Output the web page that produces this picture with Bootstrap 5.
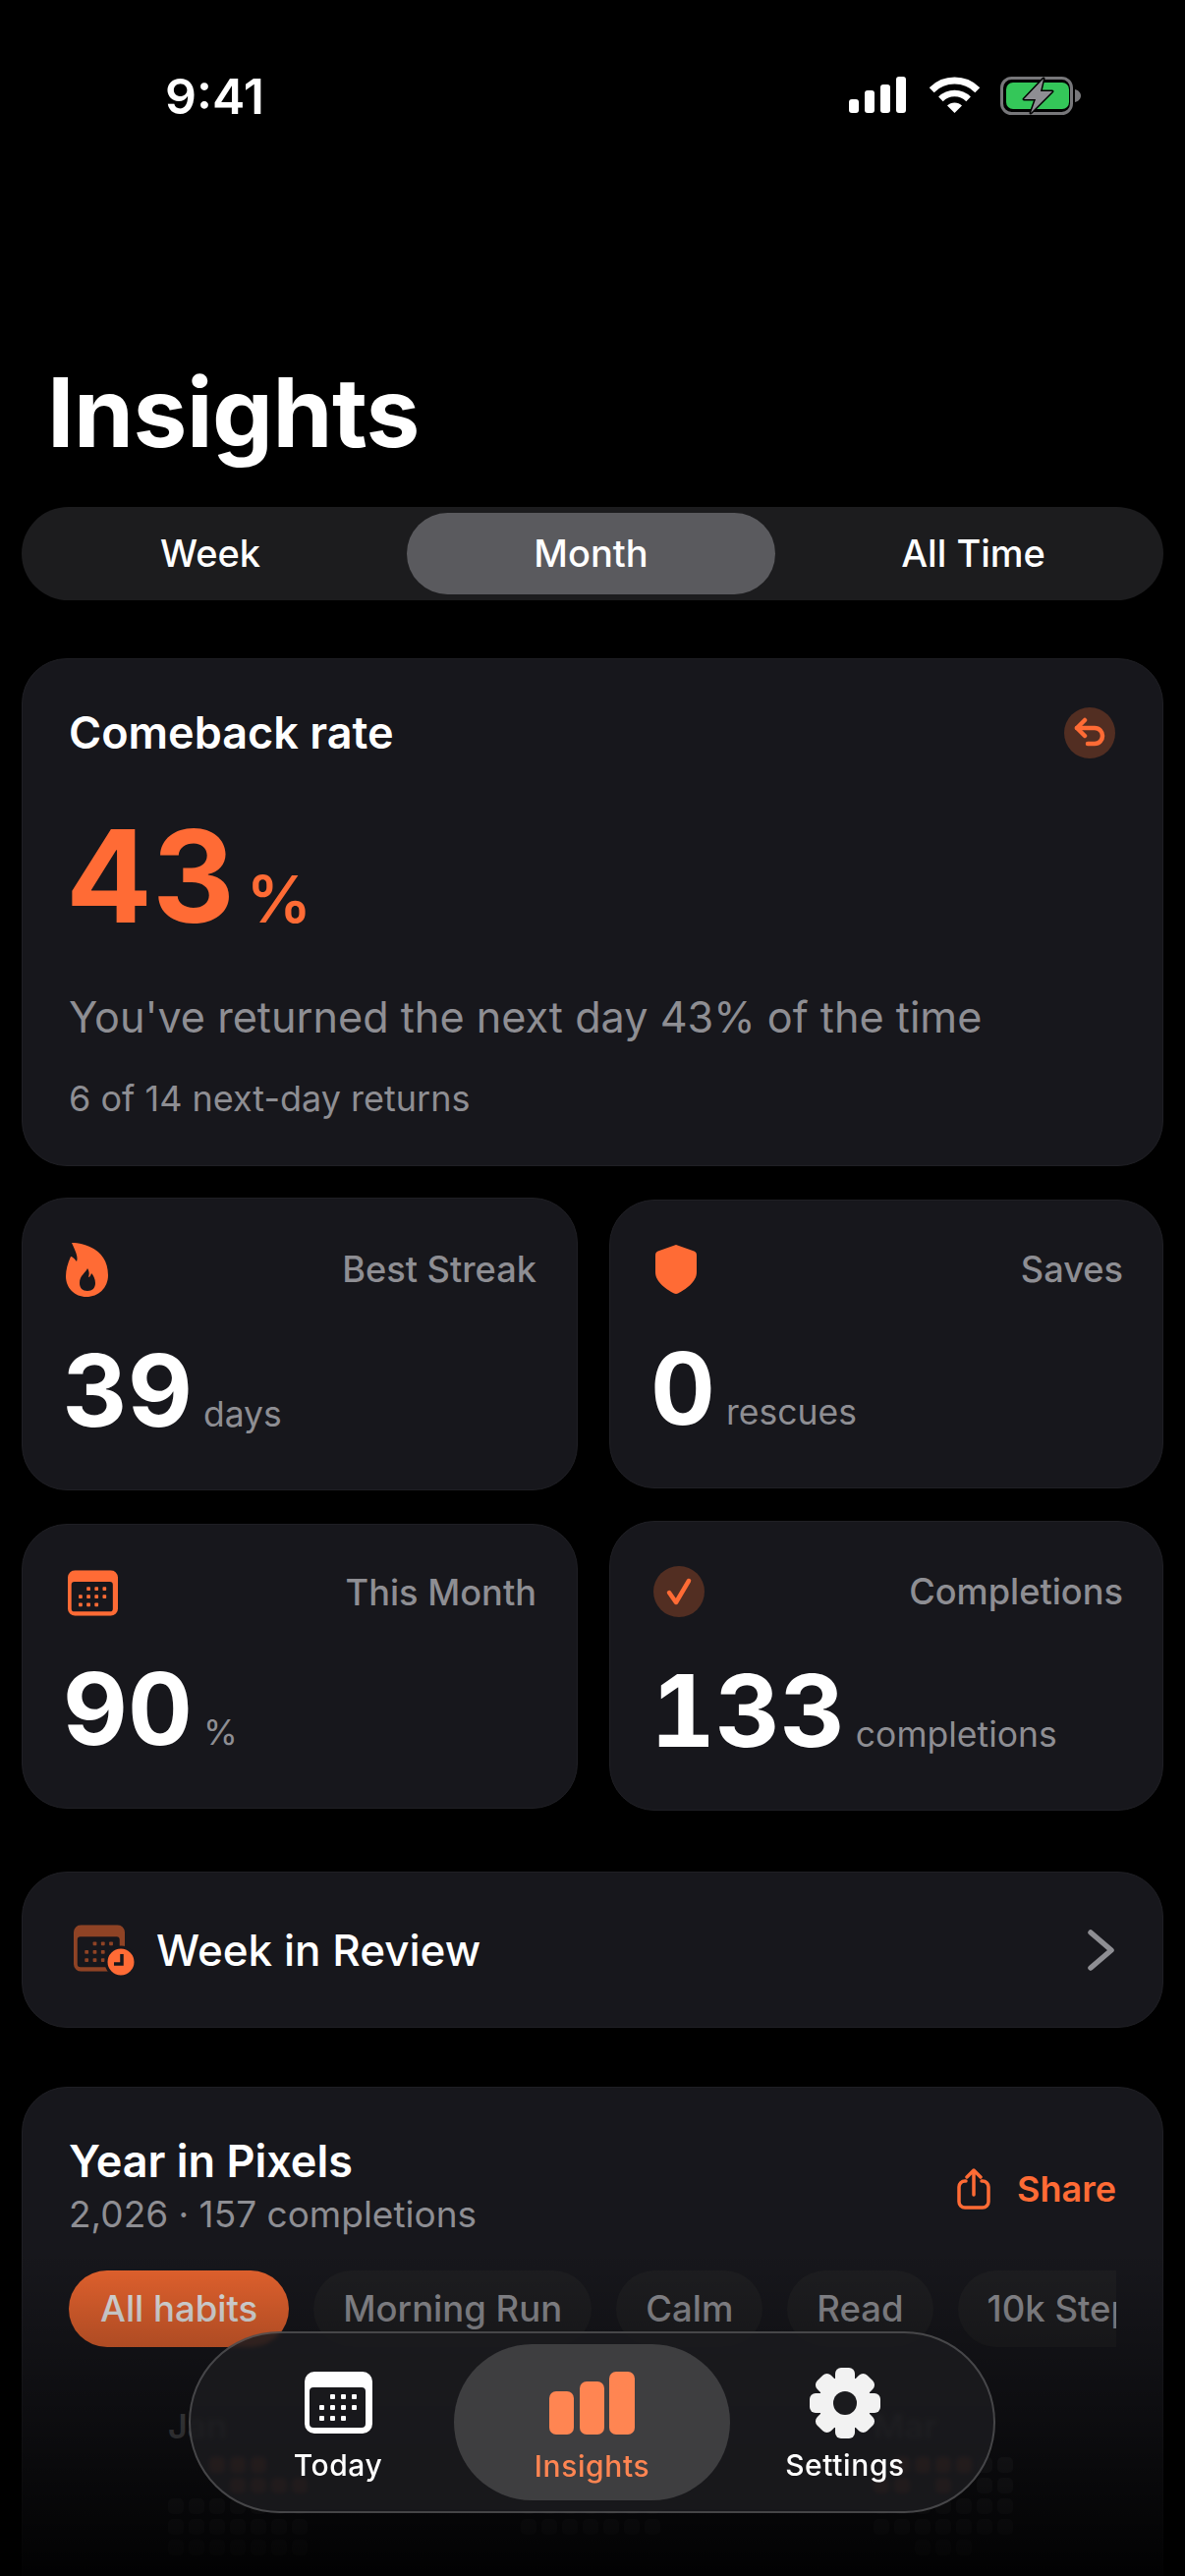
<!DOCTYPE html>
<html lang="en">
<head>
  <meta charset="UTF-8" />
  <meta name="viewport" content="width=device-width, initial-scale=1.0"/>
  <title>Insights</title>
  <link rel="stylesheet" href="https://cdn.jsdelivr.net/npm/bootstrap@5.3.0/dist/css/bootstrap.min.css"/>
  <style>
    body {
      background: #000;
      color: #fff;
      font-family: Inter, "Liberation Sans", sans-serif;
    }
    .phone { width: 1206px; height: 2622px; overflow: hidden; }
    .status-bar { height: 200px; padding: 68px 106px 0 168px; }
    .status-time { font-size: 50px; font-weight: 600; line-height: 60px; }
    .status-icons { padding-top: 10px; }
    .wifi-gap { margin-left: 24px; }
    .batt-gap { margin-left: 21px; }
    .page-title { font-size: 98px; font-weight: 700; line-height: 120px; margin: 160px 0 36px 48px; letter-spacing: -.5px; }
    .page-pad { padding: 0 22px; }

    .segment { height: 95px; background: #1c1c1e; border-radius: 48px; padding: 6px; display: flex; }
    .segment-item { display: flex; align-items: center; justify-content: center; font-size: 38px; font-weight: 500; }
    .seg-week { width: 386px; padding-right: 14px; }
    .seg-month { width: 375px; background: #5a5a5e; border-radius: 42px; }
    .seg-all { width: 389px; padding-left: 14px; }

    .panel { background: #17171c; border: 1px solid #1f1f24; border-radius: 46px; }
    .accent { color: #ff6b35; }
    .muted-txt { color: #8e8e93; }

    .comeback { height: 517px; margin-top: 59px; padding: 49px 48px 0 47px; }
    .panel-title { font-size: 45px; font-weight: 600; line-height: 52px; }
    .tint-dot { width: 52px; height: 52px; border-radius: 50%; background: #522e22; display: flex; align-items: center; justify-content: center; }
    .big-num { font-size: 130px; font-weight: 700; line-height: 140px; margin: 50px 0 0 -3px; }
    .big-unit { font-size: 66px; font-weight: 600; margin-left: 12px; line-height: 1; }
    .comeback-desc { font-size: 43.2px; line-height: 56px; margin-top: 45px; }
    .comeback-sub { font-size: 36px; line-height: 44px; margin-top: 33px; }

    .stat-cols { margin-top: 32px; gap: 32px; }
    .stat-left { width: 566px; gap: 34px; }
    .stat-right { width: 564px; gap: 33px; margin-top: 2px; }
    .stat-card { padding: 0 41px 0 44px; }
    .stat-right .stat-card { padding-right: 40px; }
    .stat-head { height: 56px; }
    .stat-label { font-size: 36.2px; font-weight: 500; }
    .stat-val { font-size: 102px; font-weight: 700; line-height: 110px; margin-left: -3px; font-variant-numeric: tabular-nums; }
    .stat-unit { font-size: 35.5px; font-weight: 400; color: #8e8e93; margin-left: 11px; line-height: 1; }
    .stat-a { height: 298px; padding-top: 44px; }
    .stat-a .stat-val { margin-top: 40px; }
    .stat-b { height: 290px; padding-top: 41px; }
    .stat-b .stat-val { margin-top: 35px; }
    .stat-c { height: 294px; padding-top: 42px; }
    .stat-c .stat-val { margin-top: 38px; }
    .stat-d { height: 295px; padding-top: 43px; }
    .stat-d .stat-val { margin-top: 38px; }
    .cal-shift { margin-left: 2px; }

    .review { height: 159px; margin-top: 62px; padding: 0 48px 0 52px; }
    .review-txt { font-size: 44px; font-weight: 500; margin-left: 18px; }

    .pixels { height: 600px; margin-top: 60px; padding: 49px 47px 0; overflow: hidden; }
    .pixels-sub { font-size: 37px; line-height: 44px; margin-top: 6px; }
    .share-row { padding-top: 6px; }
    .share-txt { font-size: 36px; font-weight: 600; margin-left: 27px; }
    .chip-row { margin-top: 35px; gap: 25px; overflow: hidden; }
    .chip { flex: none; height: 78px; padding: 0 30px; border-radius: 39px; background: #1e1e21; color: #8e8e93; font-size: 36.5px; font-weight: 500; display: flex; align-items: center; }
    .chip-on { background: #e8642f; color: #e8e8e8; padding: 0 32px; }
    .month-row { margin-top: 64px; padding-left: 101px; gap: 217px; }
    .month-label { font-size: 34px; font-weight: 600; line-height: 34px; color: #58585c; margin-bottom: 14px; }
    .month-grid { display: grid; grid-template-columns: repeat(7, 16px); grid-auto-rows: 16px; gap: 5px; }
    .month-low { margin-top: 11px; }
    .pix { border-radius: 5px; background: #26262b; }
    .pix-on { background: #c9562c; }
    .pix-none { background: transparent; }

    .bottom-fade { position: absolute; left: 0; right: 0; bottom: 0; height: 332px; pointer-events: none;
      background: linear-gradient(to bottom, rgba(0,0,0,0) 0, rgba(0,0,0,.25) 30%, rgba(0,0,0,.55) 63%, rgba(0,0,0,.92) 100%); }
    .tab-bar { position: absolute; left: 192px; bottom: 64px; width: 821px; height: 185px; border-radius: 93px;
      background: rgba(27,27,30,.86); border: 2px solid rgba(255,255,255,.2); backdrop-filter: blur(2px); padding: 11px 0; display: flex; }
    .tab-item { display: flex; flex-direction: column; align-items: center; font-size: 30px; font-weight: 500; letter-spacing: .6px; }
    .tab-today { width: 236px; margin-left: 32px; padding-top: 28px; }
    .tab-active { width: 281px; background: #3e3e40; border-radius: 81px; color: #ff8552; padding-top: 28px; }
    .tab-settings { width: 234px; padding-top: 24px; }
    .tab-label { line-height: 36px; margin-top: 14px; }
    .tab-settings .tab-label { margin-top: 9px; }
  </style>
</head>
<body>
  <svg width="0" height="0" class="position-absolute">
    <symbol id="calendar" viewBox="0 0 69 63">
      <path fill-rule="evenodd" d="M10 0H59A10 10 0 0 1 69 10V53A10 10 0 0 1 59 63H10A10 10 0 0 1 0 53V10A10 10 0 0 1 10 0ZM9 16A4 4 0 0 0 5 20V53A4 4 0 0 0 9 57H58A4 4 0 0 0 62 53V20A4 4 0 0 0 58 16Z"/>
      <rect x="26" y="23" width="5" height="5" rx="1"/><rect x="37" y="23" width="5" height="5" rx="1"/><rect x="48" y="23" width="5" height="5" rx="1"/>
      <rect x="15" y="34" width="5" height="5" rx="1"/><rect x="26" y="34" width="5" height="5" rx="1"/><rect x="37" y="34" width="5" height="5" rx="1"/><rect x="48" y="34" width="5" height="5" rx="1"/>
      <rect x="15" y="45" width="5" height="5" rx="1"/><rect x="26" y="45" width="5" height="5" rx="1"/><rect x="37" y="45" width="5" height="5" rx="1"/>
    </symbol>
  </svg>

  <div class="phone position-relative">
    <div class="status-bar d-flex justify-content-between align-items-start">
      <div class="status-time">9:41</div>
      <div class="status-icons d-flex">
        <svg width="58" height="37" viewBox="0 0 58 37" fill="#fff"><rect x="0" y="23" width="10" height="14" rx="3"/><rect x="16" y="14" width="10" height="23" rx="3"/><rect x="32" y="8" width="10" height="29" rx="3"/><rect x="48" y="0" width="10" height="37" rx="3"/></svg>
        <svg class="wifi-gap" width="51" height="37" viewBox="0 0 51 37" fill="none" stroke="#fff"><path stroke-width="7" d="M2.2 13.7A33 33 0 0 1 48.8 13.7"/><path stroke-width="6.5" d="M11.4 22.9A20 20 0 0 1 39.6 22.9"/><path fill="#fff" stroke="none" d="M25.5 37L18 29.5A10.6 10.6 0 0 1 33 29.5Z"/></svg>
        <svg class="batt-gap" width="82" height="39" viewBox="0 0 82 39"><rect x="1.5" y="1.5" width="71" height="36" rx="10" fill="none" stroke="#77777a" stroke-width="3"/><rect x="6" y="6" width="64" height="27" rx="7" fill="#34c759"/><path fill="#77777a" d="M76 13C80 14 82 17 82 19.5S80 25 76 26Z"/><path fill="#8e8e93" stroke="#000" stroke-width="3" paint-order="stroke" stroke-linejoin="round" d="M44 2L24 23H36L31 37L53 15H41Z"/></svg>
      </div>
    </div>

    <h1 class="page-title">Insights</h1>

    <div class="page-pad">
      <div class="segment">
        <div class="segment-item seg-week">Week</div>
        <div class="segment-item seg-month">Month</div>
        <div class="segment-item seg-all">All Time</div>
      </div>

      <div class="panel comeback">
        <div class="d-flex justify-content-between align-items-center">
          <div class="panel-title">Comeback rate</div>
          <div class="tint-dot">
            <svg width="32" height="32" viewBox="0 0 32 32" fill="none" stroke="#ff6b35" stroke-width="4.5" stroke-linecap="round" stroke-linejoin="round"><path d="M11 3L3 11L11 19"/><path d="M3 11H21C26 11 29 15 29 19S26 27 21 27H14"/></svg>
          </div>
        </div>
        <div class="big-num accent">43<span class="big-unit">%</span></div>
        <div class="comeback-desc muted-txt">You've returned the next day 43% of the time</div>
        <div class="comeback-sub muted-txt">6 of 14 next-day returns</div>
      </div>

      <div class="stat-cols d-flex">
        <div class="stat-left d-flex flex-column">
          <div class="panel stat-card stat-a">
            <div class="stat-head d-flex justify-content-between align-items-center">
              <svg width="43" height="55" viewBox="0 0 43 55" fill="#ff6b35"><path fill-rule="evenodd" d="M6 0C18 0 43 6 43 33C43 46 33 55 21 55C9 55 0 46 0 34C0 27 2 21 5 14C6 14 8 15 11 19C13 14 9 7 6 0ZM22 26C20 31 14 33 14 41C14 46 17 49 22 49C27 49 30 46 30 41C30 37 28 33 26 31C25 34 24 35 23 35C24 32 24 29 22 26Z"/></svg>
              <div class="stat-label muted-txt">Best Streak</div>
            </div>
            <div class="stat-val">39<span class="stat-unit">days</span></div>
          </div>
          <div class="panel stat-card stat-b">
            <div class="stat-head d-flex justify-content-between align-items-center">
              <svg class="cal-shift" width="51" height="47" viewBox="0 0 69 63" fill="#ff6b35"><use href="#calendar"/></svg>
              <div class="stat-label muted-txt">This Month</div>
            </div>
            <div class="stat-val">90<span class="stat-unit">%</span></div>
          </div>
        </div>
        <div class="stat-right d-flex flex-column">
          <div class="panel stat-card stat-c">
            <div class="stat-head d-flex justify-content-between align-items-center">
              <svg class="cal-shift" width="42" height="50" viewBox="0 0 42 50" fill="#ff6b35"><path d="M21 0L38 6C41 7 42 8 42 11V28C42 38 30 46 23 49.5C22 50 20 50 19 49.5C12 46 0 38 0 28V11C0 8 1 7 4 6Z"/></svg>
              <div class="stat-label muted-txt">Saves</div>
            </div>
            <div class="stat-val">0<span class="stat-unit">rescues</span></div>
          </div>
          <div class="panel stat-card stat-d">
            <div class="stat-head d-flex justify-content-between align-items-center">
              <div class="tint-dot">
                <svg width="28" height="30" viewBox="0 0 28 30" fill="none" stroke="#ff6b35" stroke-width="4.5" stroke-linecap="round" stroke-linejoin="round"><path d="M4 16L11 26L24 4"/></svg>
              </div>
              <div class="stat-label muted-txt">Completions</div>
            </div>
            <div class="stat-val">133<span class="stat-unit">completions</span></div>
          </div>
        </div>
      </div>

      <div class="panel review d-flex align-items-center">
        <svg width="66" height="52" viewBox="0 0 66 52"><svg width="52" height="48" viewBox="0 0 69 63" fill="#8f4325"><use href="#calendar"/></svg><circle cx="48" cy="38" r="15" fill="#ff6b35" stroke="#17171c" stroke-width="3"/><path d="M49 30V40H41" fill="none" stroke="#17171c" stroke-width="3.5"/></svg>
        <div class="review-txt flex-grow-1">Week in Review</div>
        <svg width="29" height="42" viewBox="0 0 29 42" fill="none" stroke="#8e8e93" stroke-width="5.5" stroke-linecap="round" stroke-linejoin="round"><path d="M4 3L25 21L4 39"/></svg>
      </div>

      <div class="panel pixels">
        <div class="d-flex justify-content-between align-items-center">
          <div>
            <div class="panel-title">Year in Pixels</div>
            <div class="pixels-sub muted-txt">2,026 · 157 completions</div>
          </div>
          <div class="share-row d-flex align-items-center accent">
            <svg width="34" height="42" viewBox="0 0 34 42" fill="none" stroke="#ff6b35" stroke-width="3.5" stroke-linecap="round" stroke-linejoin="round"><path d="M9 13H8A6 6 0 0 0 2 19V34A6 6 0 0 0 8 40H26A6 6 0 0 0 32 34V19A6 6 0 0 0 26 13H25"/><path d="M17 27V2M10 9L17 2L24 9"/></svg>
            <div class="share-txt">Share</div>
          </div>
        </div>
        <div class="chip-row d-flex">
          <div class="chip chip-on">All habits</div>
          <div class="chip">Morning Run</div>
          <div class="chip">Calm</div>
          <div class="chip">Read</div>
          <div class="chip">10k Steps</div>
        </div>
        <div class="month-row d-flex" id="monthRow"></div>
      </div>
    </div>

    <div class="bottom-fade"></div>

    <div class="tab-bar">
      <div class="tab-item tab-today">
        <svg width="69" height="63" fill="#fff"><use href="#calendar"/></svg>
        <div class="tab-label">Today</div>
      </div>
      <div class="tab-item tab-active">
        <svg width="87" height="64" viewBox="0 0 87 64" fill="#ff8552"><rect x="0" y="20" width="25" height="44" rx="7"/><rect x="31" y="10" width="25" height="54" rx="7"/><rect x="61" y="0" width="26" height="64" rx="7"/></svg>
        <div class="tab-label">Insights</div>
      </div>
      <div class="tab-item tab-settings">
        <svg width="72" height="72" viewBox="0 0 72 72" fill="#f2f2f2">
          <circle cx="36" cy="36" r="27"/>
          <g id="gearTeeth"></g>
          <circle cx="36" cy="36" r="12" fill="#1b1b1e"/>
        </svg>
        <div class="tab-label">Settings</div>
      </div>
    </div>
  </div>

  <script src="https://cdn.jsdelivr.net/npm/bootstrap@5.3.0/dist/js/bootstrap.bundle.min.js"></script>
  <script>
    // gear teeth
    const teeth = document.getElementById('gearTeeth');
    for (let i = 0; i < 8; i++) {
      const r = document.createElementNS('http://www.w3.org/2000/svg', 'rect');
      r.setAttribute('x', 26); r.setAttribute('y', 0);
      r.setAttribute('width', 20); r.setAttribute('height', 18); r.setAttribute('rx', 6);
      r.setAttribute('transform', `rotate(${i * 45} 36 36)`);
      teeth.appendChild(r);
    }

    // month grids, one string per row: . empty, x day, o day done
    const months = [
      { name: 'Jan', rows: ['..ooo..', '...oooo', 'xxxxxxx', 'xxxxxxx', 'xxxxxxx'] },
      { name: 'Feb', low: true, rows: ['xo.oxxx', 'xxoxoxx', 'xxxxxxx', 'xxxxxxx'] },
      { name: 'Mar', rows: ['.ooooxx', 'oo.o.xx', 'xxxxxxx', 'xxxxxxx', '..xxx..'] }
    ];
    const row = document.getElementById('monthRow');
    months.forEach(m => {
      const block = document.createElement('div');
      let cells = '';
      m.rows.join('').split('').forEach(c => {
        if (c === '.') cells += '<div class="pix pix-none"></div>';
        else cells += `<div class="pix ${c === 'o' ? 'pix-on' : ''}"></div>`;
      });
      block.innerHTML = `<div class="month-label">${m.name}</div><div class="month-grid ${m.low ? 'month-low' : ''}">${cells}</div>`;
      row.appendChild(block);
    });
  </script>
</body>
</html>
